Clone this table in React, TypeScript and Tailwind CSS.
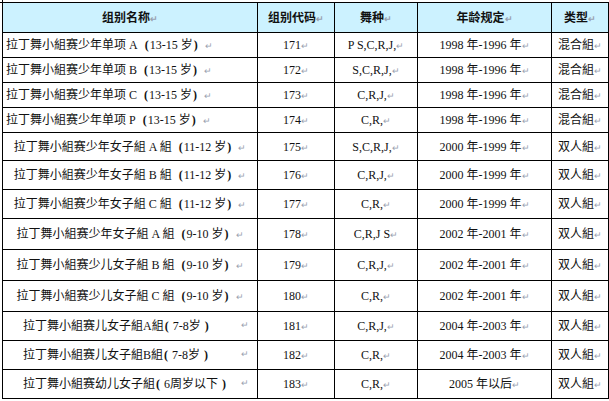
import React from "react";

const Ret = ({ cls = "" }: { cls?: string }) => (
  <span className={"text-[9px] text-gray-400 align-middle " + cls}>↵</span>
);

function Name({ text, plain = false }: { text: string; plain?: boolean }) {
  const parts: React.ReactNode[] = [];
  let buf = "";
  let k = 0;
  for (const ch of text) {
    if (ch === "(" || ch === ")") {
      if (buf) parts.push(<span key={k++}>{buf}</span>);
      buf = "";
      parts.push(
        <span
          key={k++}
          className={
            plain
              ? "inline-block font-bold px-[1px]"
              : "inline-block w-[12px] font-bold " + (ch === "(" ? "text-right pr-[1px]" : "text-left pl-[1px]")
          }
        >
          {ch}
        </span>
      );
    } else buf += ch;
  }
  if (buf) parts.push(<span key={k++}>{buf}</span>);
  return <>{parts}</>;
}

type Row = { name: string; code: string; dance: string; age: string; type: string; mode: "left" | "center" | "wide"; h: string };

const rows: Row[] = [
  { name: "拉丁舞小組赛少年单项 A(13-15 岁)", code: "171", dance: "P S,C,R,J,", age: "1998 年-1996 年", type: "混合組", mode: "left", h: "h-[25px]" },
  { name: "拉丁舞小組赛少年单项 B(13-15 岁)", code: "172", dance: "S,C,R,J,", age: "1998 年-1996 年", type: "混合組", mode: "left", h: "h-[25px]" },
  { name: "拉丁舞小組赛少年单项 C(13-15 岁)", code: "173", dance: "C,R,J,", age: "1998 年-1996 年", type: "混合組", mode: "left", h: "h-[25px]" },
  { name: "拉丁舞小組赛少年单项 P(13-15 岁)", code: "174", dance: "C,R,", age: "1998 年-1996 年", type: "混合組", mode: "left", h: "h-[25px]" },
  { name: "拉丁舞小組赛少年女子組 A 組(11-12 岁)", code: "175", dance: "S,C,R,J,", age: "2000 年-1999 年", type: "双人組", mode: "center", h: "h-[28px]" },
  { name: "拉丁舞小組赛少年女子組 B 組(11-12 岁)", code: "176", dance: "C,R,J,", age: "2000 年-1999 年", type: "双人組", mode: "center", h: "h-[29px]" },
  { name: "拉丁舞小組赛少年女子組 C 組(11-12 岁)", code: "177", dance: "C,R,", age: "2000 年-1999 年", type: "双人組", mode: "center", h: "h-[29px]" },
  { name: "拉丁舞小組赛少年女子組 A 組(9-10 岁)", code: "178", dance: "C,R,J S", age: "2002 年-2001 年", type: "双人組", mode: "center", h: "h-[31px]" },
  { name: "拉丁舞小組赛少儿女子組 B 組(9-10 岁)", code: "179", dance: "C,R,J,", age: "2002 年-2001 年", type: "双人組", mode: "center", h: "h-[31px]" },
  { name: "拉丁舞小組赛少儿女子組 C 組(9-10 岁)", code: "180", dance: "C,R,", age: "2002 年-2001 年", type: "双人組", mode: "center", h: "h-[31px]" },
  { name: "拉丁舞小組赛儿女子組A組( 7-8岁 )", code: "181", dance: "C,R,J,", age: "2004 年-2003 年", type: "双人組", mode: "wide", h: "h-[29px]" },
  { name: "拉丁舞小組赛儿女子組B組( 7-8岁 )", code: "182", dance: "C,R,", age: "2004 年-2003 年", type: "双人組", mode: "wide", h: "h-[29px]" },
  { name: "拉丁舞小組赛幼儿女子組( 6周岁以下 )", code: "183", dance: "C,R,", age: "2005 年以后", type: "双人組", mode: "wide", h: "h-[29px]" },
];

const cell = "border border-black p-0 align-middle";

export default function App() {
  return (
    <div className="w-[609px] h-[401px] bg-white relative overflow-hidden" style={{ fontFamily: '"Liberation Serif", "Noto Sans CJK SC", serif' }}>
      <div className="absolute left-0 top-0 w-[3px] h-[3px] border-r border-b border-black" />
      <div className="pt-[2px] pl-[2px]">
        <table className="border-collapse table-fixed w-[606px] text-[12px] text-[#111]">
          <colgroup>
            <col className="w-[255px]" />
            <col className="w-[77px]" />
            <col className="w-[83px]" />
            <col className="w-[134px]" />
            <col className="w-[57px]" />
          </colgroup>
          <thead>
            <tr className="h-[30px] bg-[#ccf2ff] font-bold">
              <th className={cell + " text-center"}>组别名称<Ret /></th>
              <th className={cell + " text-center"}>组别代码<Ret /></th>
              <th className={cell + " text-center"}>舞种<Ret /></th>
              <th className={cell + " text-center"}>年龄规定<Ret /></th>
              <th className={cell + " text-center"}>类型<Ret /></th>
            </tr>
          </thead>
          <tbody>
            {rows.map((r) => (
              <tr key={r.code} className={r.h}>
                <td
                  className={
                    cell +
                    (r.mode === "left" ? " text-left pl-[3px]" : r.mode === "wide" ? " text-left pl-[20px]" : " text-center")
                  }
                >
                  {r.mode === "wide" ? (
                    <span className="inline-flex items-center">
                      <span className="w-[218px] text-left whitespace-pre">
                        <Name text={r.name} plain />
                      </span>
                      <Ret />
                    </span>
                  ) : (
                    <>
                      <Name text={r.name} />
                      <Ret />
                    </>
                  )}
                </td>
                <td className={cell + " text-center"}>{r.code}<Ret /></td>
                <td className={cell + " text-center"}>{r.dance}<Ret /></td>
                <td className={cell + " text-center"}>{r.age}<Ret /></td>
                <td className={cell + " text-center"}>{r.type}<Ret /></td>
              </tr>
            ))}
          </tbody>
        </table>
      </div>
    </div>
  );
}
